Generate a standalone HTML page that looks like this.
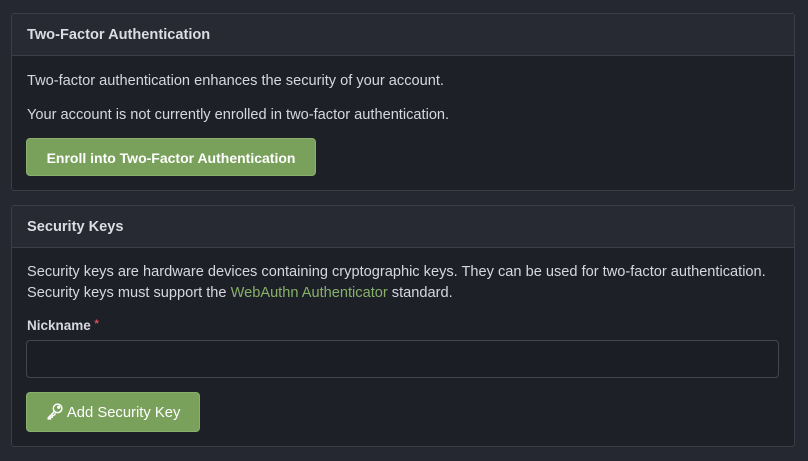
<!DOCTYPE html><html><head><style>
body{margin:0;width:808px;height:461px;background:#262831;font-family:"Liberation Sans",sans-serif;font-size:14.6px;color:#d6d8de;overflow:hidden}
.p{position:absolute;left:11px;width:782px;border:1px solid #3b3e48;border-radius:3px;background:#1e2028}
.h{height:41px;line-height:43px;padding-left:15px;background:#282a33;border-bottom:1px solid #3b3e48;font-weight:bold;font-size:14.6px;color:#dcdde2}
.t{position:absolute;left:15px;white-space:nowrap}
.b{position:absolute;left:14px;background:#79a15b;border-radius:4px;color:#fff;font-weight:bold;text-align:center;border:1px solid #8ab06c}
a{color:#87b06a;text-decoration:none}
</style></head><body>
<div class="p" style="top:13px;height:176px">
<div class="h">Two-Factor Authentication</div>
<div class="t" style="top:59px">Two-factor authentication enhances the security of your account.</div>
<div class="t" style="top:93px">Your account is not currently enrolled in two-factor authentication.</div>
<div class="b" style="top:124px;width:288px;height:36px;line-height:38px;font-size:14px">Enroll into Two-Factor Authentication</div>
</div>
<div class="p" style="top:205px;height:240px">
<div class="h">Security Keys</div>
<div class="t" style="top:58px">Security keys are hardware devices containing cryptographic keys. They can be used for two-factor authentication.</div>
<div class="t" style="top:79px">Security keys must support the <a>WebAuthn Authenticator</a> standard.</div>
<div class="t" style="top:112px;font-weight:bold;font-size:13.5px">Nickname <span style="color:#e0505a;font-size:11px;vertical-align:top">*</span></div>
<div style="position:absolute;left:14px;top:134px;width:751px;height:36px;border:1px solid #434650;border-radius:4px;background:#1c1e25"></div>
<div class="b" style="top:186px;width:172px;height:38px;line-height:40px;font-weight:normal;font-size:14.8px">
<svg width="18" height="18" viewBox="0 0 16 16" style="vertical-align:-3px" fill="none" stroke="#fff" stroke-width="1.3"><circle cx="10.3" cy="5.7" r="3.8"/><circle cx="11.3" cy="4.7" r="0.8"/><path d="M7.6 8.4L2 14v1h2v-1.5h1.5v-1.5h1.3l1.8-1.8"/></svg> Add Security Key</div>
</div>
</body></html>
